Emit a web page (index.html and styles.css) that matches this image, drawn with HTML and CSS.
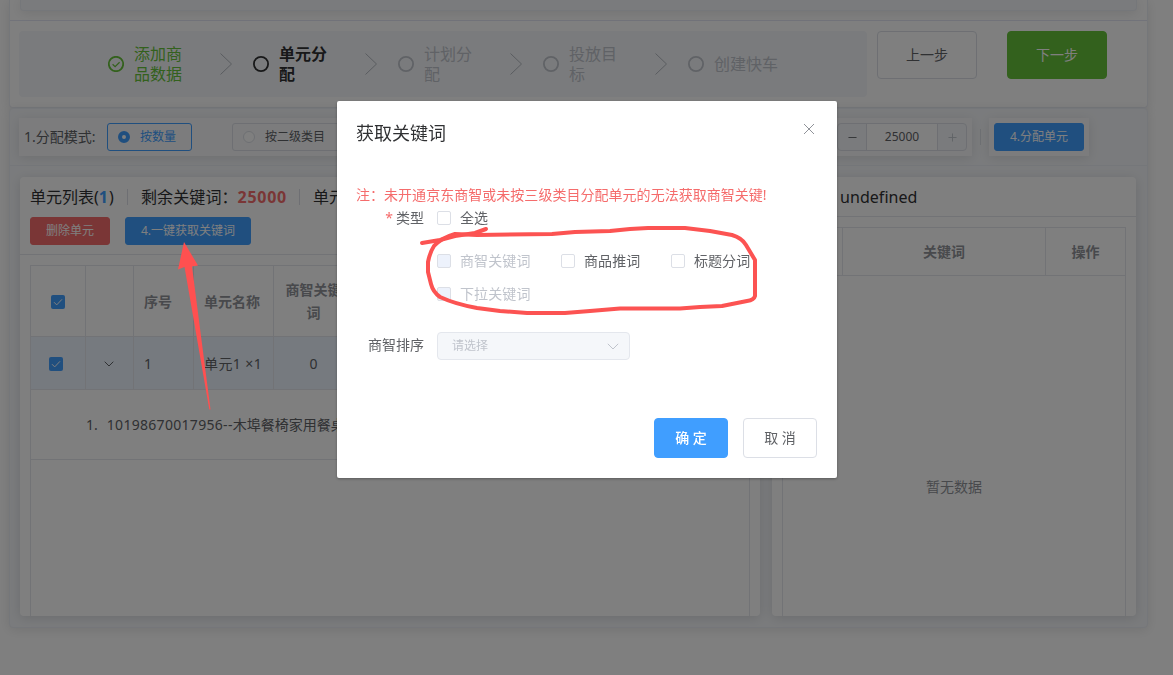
FILE: index.html
```html
<!DOCTYPE html>
<html lang="zh-CN">
<head>
<meta charset="utf-8">
<title>获取关键词</title>
<link rel="stylesheet" href="styles.css">
</head>
<body>
<div class="page">
  <section class="card top-card">
    <div class="summary"><div class="summary-box"></div></div>
    <div class="steps-row">
      <div class="steps">
        <div class="step done">
          <svg class="step-icon" viewBox="0 0 16 16"><circle cx="8" cy="8" r="7.2"/><path d="M4.6 8.2l2.5 2.4 4.5-4.4" class="thin"/></svg>
          <span class="step-title">添加商品数据</span>
          <svg class="step-arrow" viewBox="0 0 12 22"><path d="M.5.5l11 10.5-11 10.5"/></svg>
        </div>
        <div class="step current">
          <svg class="step-icon" viewBox="0 0 16 16"><circle cx="8" cy="8" r="7.1"/></svg>
          <span class="step-title">单元分配</span>
          <svg class="step-arrow" viewBox="0 0 12 22"><path d="M.5.5l11 10.5-11 10.5"/></svg>
        </div>
        <div class="step">
          <svg class="step-icon" viewBox="0 0 16 16"><circle cx="8" cy="8" r="7.1"/></svg>
          <span class="step-title">计划分配</span>
          <svg class="step-arrow" viewBox="0 0 12 22"><path d="M.5.5l11 10.5-11 10.5"/></svg>
        </div>
        <div class="step">
          <svg class="step-icon" viewBox="0 0 16 16"><circle cx="8" cy="8" r="7.1"/></svg>
          <span class="step-title">投放目标</span>
          <svg class="step-arrow" viewBox="0 0 12 22"><path d="M.5.5l11 10.5-11 10.5"/></svg>
        </div>
        <div class="step last">
          <svg class="step-icon" viewBox="0 0 16 16"><circle cx="8" cy="8" r="7.1"/></svg>
          <span class="step-title">创建快车</span>
        </div>
      </div>
      <button class="btn nav-btn prev">上一步</button>
      <button class="btn nav-btn next">下一步</button>
    </div>
  </section>

  <section class="card main-card">
    <div class="toolbar">
      <div class="tool-box mode-box">
        <span class="mode-label">1.分配模式:</span>
        <span class="radio checked"><i class="dot"></i>按数量</span>
        <span class="radio"><i class="dot"></i>按二级类目</span>
        <div class="number">
          <span class="num-btn"><svg viewBox="0 0 10 10"><path d="M.5 5h9"/></svg></span>
          <span class="num-value">25000</span>
          <span class="num-btn plus"><svg viewBox="0 0 10 10"><path d="M.5 5h9M5 .5v9"/></svg></span>
        </div>
      </div>
      <i class="divider"></i>
      <div class="tool-box assign-box"><button class="btn small primary">4.分配单元</button></div>
    </div>

    <div class="panels">
      <div class="panel">
        <div class="panel-head units-head">
          <div class="head-line"><span>单元列表(<b class="blue">1</b>)</span><i class="divider"></i><span class="remain">剩余关键词：<b class="red">25000</b></span><i class="divider"></i><span>单元</span></div>
          <div class="head-buttons"><button class="btn small danger">删除单元</button><button class="btn small primary fetch">4.一键获取关键词</button></div>
        </div>
        <div class="table units">
          <div class="tr th">
            <div class="td"><span class="check on"><svg viewBox="0 0 14 14"><path d="M3 7.2l2.7 2.7L11 4.3"/></svg></span></div>
            <div class="td"></div>
            <div class="td left">序号</div>
            <div class="td name">单元名称</div>
            <div class="td">商智关键词</div>
            <div class="td"></div>
          </div>
          <div class="tr selected">
            <div class="td pick"><span class="check on"><svg viewBox="0 0 14 14"><path d="M3 7.2l2.7 2.7L11 4.3"/></svg></span></div>
            <div class="td"><svg class="chevron" viewBox="0 0 10 6"><path d="M.7.7L5 5 9.3.7"/></svg></div>
            <div class="td left">1</div>
            <div class="td name unit">单元1 ×1</div>
            <div class="td">0</div>
            <div class="td"></div>
          </div>
          <div class="expand"><span>1.</span><span><span class="sku">10198670017956--</span>木埠餐椅家用餐桌</span></div>
        </div>
      </div>
      <div class="panel">
        <div class="panel-head words-head">undefined</div>
        <div class="table words">
          <div class="tr th"><div class="td"></div><div class="td">关键词</div><div class="td">操作</div></div>
          <div class="empty">暂无数据</div>
        </div>
      </div>
    </div>
  </section>
</div>

<div class="mask">
  <div class="dialog">
    <div class="dialog-head"><span>获取关键词</span><svg class="close" viewBox="0 0 12 12"><path d="M1 1l10 10M11 1L1 11"/></svg></div>
    <div class="dialog-body">
      <p class="note">注：未开通京东商智或未按三级类目分配单元的无法获取商智关键!</p>
      <div class="form-row type-row">
        <span class="label"><em>*</em>类型</span>
        <span class="option"><i class="check"></i>全选</span>
      </div>
      <div class="options">
        <span class="option disabled"><i class="check"></i>商智关键词</span>
        <span class="option"><i class="check"></i>商品推词</span>
        <span class="option"><i class="check"></i>标题分词</span>
        <span class="option disabled"><i class="check"></i>下拉关键词</span>
      </div>
      <div class="form-row sort-row">
        <span class="label">商智排序</span>
        <span class="select">请选择<svg viewBox="0 0 12 7"><path d="M.8.8L6 6 11.2.8"/></svg></span>
      </div>
    </div>
    <div class="dialog-foot"><button class="btn primary">确 定</button><button class="btn">取 消</button></div>
  </div>
</div>

<svg class="marks" viewBox="0 0 1173 675">
  <path class="arrow" d="M184 242L198 265.500L192 266.500L210.500 409.500L209.300 409.500L184.500 267L178 269.500Z"/>
  <path class="loop" d="M422 243L440 240L455 236L475 233L486 229"/>
  <path class="loop" d="M477 235L552 234L575 232L610 231L630 229L648 228H685L710 231L732 235Q742 238 746 245L755 260V296Q754 300 747 301L722 306L700 307L680 308.500H620L590 311L565 313H527L500 311L477 308Q455 304 440 297Q433 292 431 284L428 272V262Q430 252 434 246Q441 238 455 234L477 235"/>
</svg>
</body>
</html>
```
FILE: styles.css
```css
* { box-sizing: border-box; }
body {
  margin: 0;
  height: 675px;
  overflow: hidden;
  background: #fff;
  color: #606266;
  font: 14px/20px "Noto Sans", "Noto Sans CJK SC", sans-serif;
}
svg { fill: none; stroke: currentColor; flex: none; }
p { margin: 0; }

.page { padding: 0 25px 0 9px; height: 675px; }
.card { border: 1px solid #ebeef5; box-shadow: 0 2px 12px rgba(0, 0, 0, .1); }
.top-card { height: 108px; border-top: 0; border-radius: 0 0 4px 4px; background: #fff; }
.summary { height: 21px; padding: 0 10px; border-bottom: 1px solid #e4e7f5; }
.summary-box { height: 11px; border: 1px solid #ebeef5; border-top: 0; border-radius: 0 0 4px 4px; background: #f5f7fa; box-shadow: 0 2px 12px rgba(0, 0, 0, .1); }
.steps-row { display: flex; align-items: flex-start; padding: 10px 39px 0 9px; }
.steps { display: flex; align-items: center; width: 848px; height: 66px; padding-left: 89px; border-radius: 4px; background: #f5f7fa; }
.step { display: flex; align-items: center; width: 145px; color: #c0c4cc; }
.step.done { color: #67c23a; }
.step.current { color: #303133; }
.step.current .step-title { font-weight: 700; }
.step-icon { width: 16px; height: 16px; stroke-width: 1.8; }
.step-icon .thin { stroke-width: 1.2; }
.step-title { width: 48px; margin-left: 10px; font-size: 16px; line-height: 20px; }
.last .step-title { width: 66px; }
.step-arrow { width: 12px; height: 22px; margin-left: 38px; color: #b4b8c0; }

.btn { display: block; padding: 0; border: 1px solid #dcdfe6; border-radius: 4px; background: #fff; color: #606266; font: 14px/20px "Noto Sans", "Noto Sans CJK SC", sans-serif; white-space: nowrap; }
.btn.small { height: 28px; border-radius: 3px; font-size: 12px; }
.btn.primary { border-color: #409eff; background: #409eff; color: #fff; }
.btn.danger { width: 80px; border-color: #f56c6c; background: #f56c6c; color: #fff; }
.btn.fetch { width: 126px; }
.nav-btn { width: 100px; height: 48px; }
.prev { margin-left: 10px; }
.next { margin-left: 30px; border-color: #67c23a; background: #67c23a; color: #fff; }

.main-card { height: 520px; border-radius: 4px; background: #f5f7fa; }
.toolbar { display: flex; align-items: center; height: 57px; padding: 0 9px; border-bottom: 1px solid #ebeef5; }
.tool-box { display: flex; align-items: center; height: 38px; padding: 5px; background: #f8f9fb; box-shadow: 0 2px 12px rgba(0, 0, 0, .1); }
.mode-box { width: 953px; }
.mode-label { width: 83px; color: #606266; white-space: nowrap; }
.radio { display: flex; align-items: center; width: 85px; height: 28px; margin-right: 40px; padding-left: 10px; border: 1px solid #dcdfe6; border-radius: 3px; font-size: 12px; white-space: nowrap; }
.radio + .radio { width: 110px; }
.dot { width: 12px; height: 12px; margin-right: 10px; border: 1px solid #dcdfe6; border-radius: 50%; background: #fff; }
.radio.checked { border-color: #409eff; color: #409eff; }
.radio.checked .dot { border: 4px solid #409eff; }
.number { display: flex; width: 130px; height: 28px; margin-left: auto; border: 1px solid #dcdfe6; border-radius: 4px; background: #f5f7fa; overflow: hidden; }
.num-btn { display: grid; place-items: center; width: 28px; }
.num-btn svg { width: 9px; height: 9px; }
.plus { color: #c0c4cc; }
.num-value { flex: 1; border: solid #dcdfe6; border-width: 0 1px; background: #fff; font-size: 12px; line-height: 26px; text-align: center; }
.divider { display: block; flex: none; width: 1px; height: 16px; background: #dcdfe6; }
.toolbar > .divider { margin: 0 8px; }
.assign-box .btn { width: 90px; }

.panels { display: grid; grid-template-columns: 740px 364px; gap: 12px; height: 439px; margin: 11px 0 0 10px; }
.panel { display: flex; flex-direction: column; border-radius: 4px; background: #fff; box-shadow: 0 2px 12px rgba(0, 0, 0, .12); }
.panel-head { color: #303133; font-size: 16px; border-bottom: 1px solid #e4e7ed; }
.units-head { height: 78px; padding: 10px 10px 0; }
.head-line { display: flex; align-items: center; height: 20px; white-space: nowrap; width: 315px; overflow: hidden; }
.head-line .divider { margin: 0 13px 0 12px; }
.blue { margin: 0 1px 0 0; color: #409eff; }
.red { color: #f56c6c; letter-spacing: .7px; }
.remain { letter-spacing: .1px; }
.head-line > span:first-child { width: 85px; }
.head-buttons { display: flex; gap: 15px; margin-top: 10px; }
.words-head { height: 40px; padding: 10px 0 0 68px; letter-spacing: .05px; }
.table { flex: 1; margin: 10px 10px 0; border: 1px solid #e4e7ed; border-bottom: 0; }
.tr { display: grid; border-bottom: 1px solid #e4e7ed; }
.units .tr { grid-template-columns: 55px 48px 60px 80px 80px 1fr; }
.units .th { height: 71px; }
.selected { height: 53px; background: #ecf5ff; }
.words .tr { grid-template-columns: 60px 203px 1fr; height: 48px; }
.td { display: flex; align-items: center; justify-content: center; padding: 0 10px; border-right: 1px solid #e4e7ed; line-height: 23px; text-align: center; white-space: nowrap; }
.td:last-child { border-right: 0; }
.td.left { justify-content: flex-start; }
.td.name { padding: 0 10px; justify-content: flex-start; }
.td.unit { letter-spacing: .4px; }
.th .td { color: #909399; font-weight: 700; white-space: normal; }
.units .th .name { white-space: nowrap; }
.td .check { margin-top: 2px; }
.td.pick { padding-right: 15px; }
.chevron { width: 10px; height: 6px; margin: 1px 1px 0 0; color: #606266; }
.check { display: grid; flex: none; width: 14px; height: 14px; border: 1px solid #dcdfe6; border-radius: 2px; background: #fff; }
.check.on { border: 0; background: #409eff; color: #fff; }
.expand { display: flex; align-items: center; gap: 9px; height: 70px; padding-left: 55px; border-bottom: 1px solid #e4e7ed; width: 323px; min-width: 100%; white-space: nowrap; }
.sku { letter-spacing: .3px; }
.empty { padding-top: 201px; color: #909399; text-align: center; }

.mask { position: fixed; inset: 0; display: flex; align-items: flex-start; padding: 101px 0 0 337px; background: rgba(0, 0, 0, .5); }
.dialog { display: flex; flex-direction: column; width: 500px; height: 377px; border-radius: 2px; background: #fff; box-shadow: 0 1px 3px rgba(0, 0, 0, .3); }
.dialog-head { display: flex; justify-content: space-between; padding: 20px 22px 0 19px; color: #303133; font-size: 18px; line-height: 24px; }
.close { width: 12px; height: 12px; margin-top: 2px; color: #909399; }
.dialog-body { padding: 40px 19px 0; }
.note { color: #f56c6c; white-space: nowrap; letter-spacing: .03px; }
.form-row { display: flex; align-items: center; }
.label { width: 68px; margin-right: 13px; text-align: right; }
.label em { margin-right: 3px; color: #f56c6c; font-style: normal; }
.type-row { height: 24px; margin-top: 1px; }
.option { display: flex; align-items: center; gap: 9px; height: 33px; white-space: nowrap; }
.options { display: flex; flex-wrap: wrap; column-gap: 30.5px; width: 330px; margin: 14px 0 0 81px; }
.options .option { letter-spacing: .1px; }
.disabled { color: #c0c4cc; }
.disabled .check { background: #edf2fc; }
.sort-row { margin-top: 22px; }
.sort-row .label { margin-top: -2px; }
.select { display: flex; align-items: center; justify-content: space-between; width: 193px; height: 28px; padding: 0 10px 0 14px; border: 1px solid #e4e7ed; border-radius: 4px; background: #f5f7fa; color: #c0c4cc; font-size: 12px; }
.select svg { width: 12px; height: 7px; }
.dialog-foot { display: flex; justify-content: flex-end; gap: 15px; margin-top: auto; padding: 0 20px 20px; }
.dialog-foot .btn { width: 74px; height: 40px; }
.dialog-foot .primary { font-weight: 500; }

.marks { position: absolute; left: 0; top: 0; width: 1173px; height: 675px; }
.arrow { fill: #ff5050; stroke: none; }
.loop { stroke: #fc5352; stroke-width: 4; stroke-linecap: round; stroke-linejoin: round; }
```
